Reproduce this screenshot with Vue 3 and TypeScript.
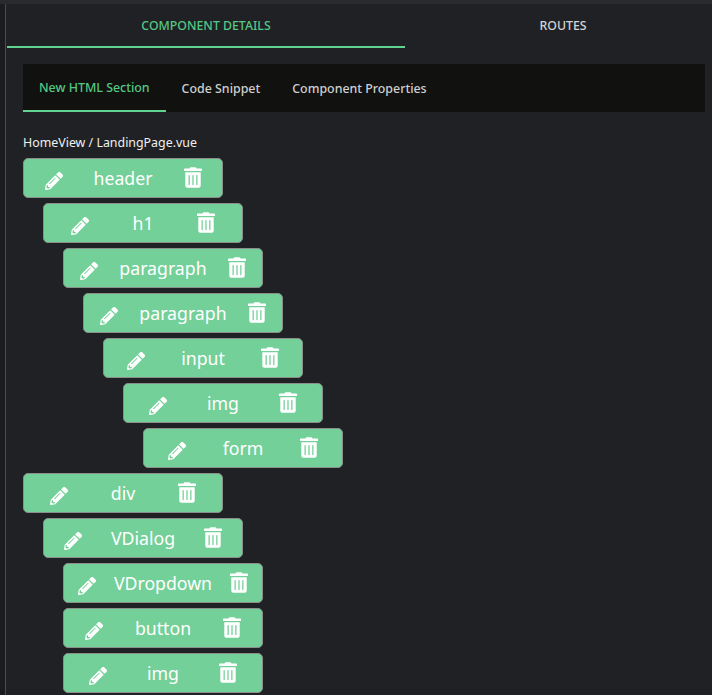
<script setup lang="ts">
const rows: { label: string; indent: number }[] = [
  { label: 'header', indent: 0 },
  { label: 'h1', indent: 1 },
  { label: 'paragraph', indent: 2 },
  { label: 'paragraph', indent: 3 },
  { label: 'input', indent: 4 },
  { label: 'img', indent: 5 },
  { label: 'form', indent: 6 },
  { label: 'div', indent: 0 },
  { label: 'VDialog', indent: 1 },
  { label: 'VDropdown', indent: 2 },
  { label: 'button', indent: 2 },
  { label: 'img', indent: 2 },
]
</script>

<template>
  <div class="page">
    <div class="topstrip"></div>
    <div class="shell">
      <div class="rail"></div>
      <main class="main">
        <nav class="tabs">
          <div class="tab active">COMPONENT DETAILS</div>
          <div class="tab routes">ROUTES</div>
        </nav>
        <section class="content">
          <nav class="subtabs">
            <div class="subtab active">New HTML Section</div>
            <div class="subtab">Code Snippet</div>
            <div class="subtab">Component Properties</div>
          </nav>
          <p class="crumb">HomeView / LandingPage.vue</p>
          <div
            v-for="(row, i) in rows"
            :key="i"
            class="node"
            :style="{ marginLeft: row.indent * 20 + 'px' }"
          >
            <svg class="pencil" viewBox="0 0 512 512" aria-hidden="true">
              <path fill="currentColor" d="M497.9 142.1l-46.1 46.1c-4.7 4.7-12.3 4.7-17 0l-111-111c-4.7-4.7-4.7-12.3 0-17l46.1-46.1c18.7-18.7 49.1-18.7 67.9 0l60.1 60.1c18.8 18.7 18.8 49.1 0 67.9zM284.2 99.8L21.6 362.4.4 483.9c-2.9 16.4 11.4 30.6 27.8 27.8l121.5-21.3 262.6-262.6c4.3-4.3 4.3-11.3 0-15.6l-112.3-112.3c-4.5-4.3-11.5-4.3-15.8-.1zM124.1 339.9c-5-5-5-13 0-18l154-154c5-5 13-5 18 0s5 13 0 18l-154 154c-5 5-13 5-18 0zM88 424h48v36.3l-64.5 11.3-31.1-31.1L51.7 376H88v48z" />
            </svg>
            <span class="label">{{ row.label }}</span>
            <svg class="trash" viewBox="0 0 448 512" aria-hidden="true">
              <path fill="currentColor" d="M32 464a48 48 0 0 0 48 48h288a48 48 0 0 0 48-48V128H32zm272-256a16 16 0 0 1 32 0v224a16 16 0 0 1-32 0zm-96 0a16 16 0 0 1 32 0v224a16 16 0 0 1-32 0zm-96 0a16 16 0 0 1 32 0v224a16 16 0 0 1-32 0zM432 32H312l-9.4-18.7A24 24 0 0 0 281.1 0H166.8a23.72 23.72 0 0 0-21.4 13.3L136 32H16A16 16 0 0 0 0 48v32a16 16 0 0 0 16 16h416a16 16 0 0 0 16-16V48a16 16 0 0 0-16-16z" />
            </svg>
          </div>
        </section>
      </main>
    </div>
  </div>
</template>

<style>
html, body { margin: 0; background: #202124; overflow: hidden; }
</style>

<style scoped>
.page {
  width: 712px;
  height: 695px;
  overflow: hidden;
  font-family: "Noto Sans", sans-serif;
  background: #202124;
}
.topstrip { height: 4px; background: #292a2d; }
.shell { display: flex; height: 691px; }
.rail {
  width: 5px;
  flex: none;
  background: #1b1c1f;
  border-right: 1px solid #4a4b4f;
}
.main { width: 715px; flex: none; margin-left: 1px; }
.tabs { display: flex; height: 44px; }
.tab {
  display: flex;
  align-items: center;
  justify-content: center;
  box-sizing: border-box;
  height: 44px;
  font-size: 12.3px;
  font-weight: 500;
  color: #d4d4d4;
}
.tab.active { width: 398px; color: #55c784; border-bottom: 2px solid #5fd38f; }
.tab.routes { width: 316px; padding-bottom: 1px; }
.content { padding: 16px 0 0 16px; }
.subtabs {
  display: flex;
  width: 682px;
  height: 48px;
  background: #11120f;
}
.subtab {
  display: flex;
  align-items: center;
  box-sizing: border-box;
  height: 48px;
  padding: 0 16px;
  font-size: 12.4px;
  font-weight: 500;
  color: #cfcfcf;
}
.subtab.active { color: #55c784; border-bottom: 2px solid #5fd38f; }
.crumb {
  margin: 21px 0 0;
  height: 25px;
  line-height: 20px;
  font-size: 12.4px;
  color: #f0f0f0;
}
.node {
  box-sizing: border-box;
  display: flex;
  align-items: center;
  justify-content: space-around;
  width: 200px;
  height: 40px;
  margin-bottom: 5px;
  padding: 0 5px;
  background: #73d098;
  border: 1px solid #8a8f8c;
  border-radius: 5px;
  color: #fff;
}
.label { font-size: 17.7px; line-height: 24px; }
.pencil { width: 18px; height: 18px; flex: none; margin-top: 6px; }
.trash { width: 18px; height: 21px; flex: none; margin-top: -2px; }
</style>
